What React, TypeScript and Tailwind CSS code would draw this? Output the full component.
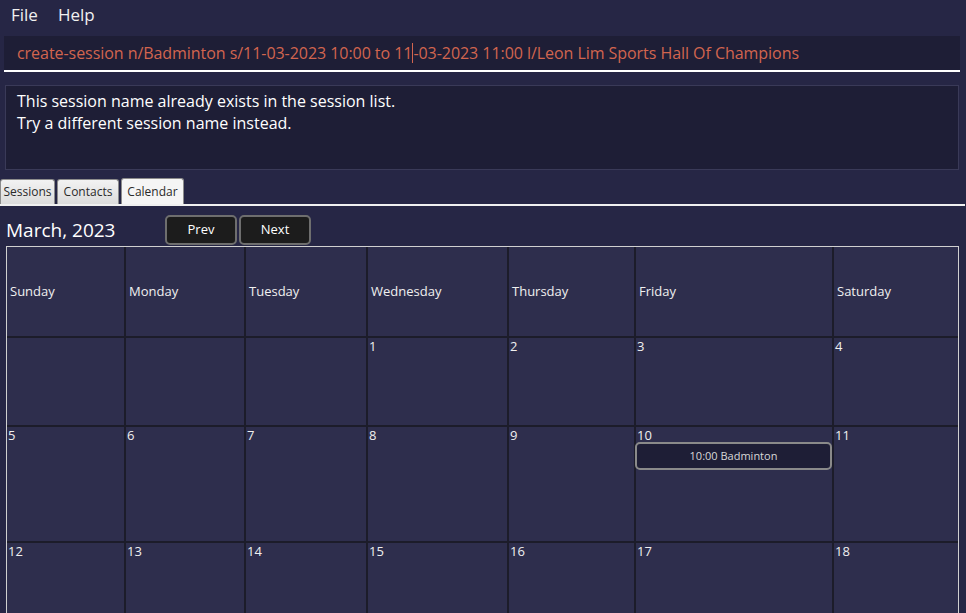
import React from "react";

const font = { fontFamily: '"Open Sans", "Noto Sans", sans-serif' };

const days = ["Sunday", "Monday", "Tuesday", "Wednesday", "Thursday", "Friday", "Saturday"];
const weeks: (number | null)[][] = [
  [null, null, null, 1, 2, 3, 4],
  [5, 6, 7, 8, 9, 10, 11],
  [12, 13, 14, 15, 16, 17, 18],
];

export default function App() {
  return (
    <div className="w-[966px] h-[613px] overflow-hidden bg-[#262645] text-white" style={font}>
      {/* Menu bar */}
      <div className="h-[30px] flex items-center pl-[11px] gap-[20px] text-[17px] text-[#f0f0f0]">
        <span>File</span>
        <span>Help</span>
      </div>
      {/* Command box */}
      <div className="mt-[6px] ml-[4px] w-[956px] h-[36px] bg-[#1e1e36] border-b-2 border-white flex items-center pl-[13px] text-[16px] tracking-[-0.05px] text-[#d2654f] whitespace-nowrap">
        <span>create-session n/Badminton s/11-03-2023 10:00 to 11</span>
        <span className="inline-block w-[1px] h-[20px] bg-[#d2654f]" />
        <span>-03-2023 11:00 l/Leon Lim Sports Hall Of Champions</span>
      </div>
      {/* Result box */}
      <div className="mt-[13px] ml-[5px] w-[954px] h-[85px] bg-[#1e1e36] border border-[#3a3a58] pl-[11px] pt-[4px] text-[16px] leading-[22px] text-white">
        <div>This session name already exists in the session list.</div>
        <div>Try a different session name instead.</div>
      </div>
      {/* Tabs */}
      <div className="mt-[8px] h-[26px] flex items-end gap-[2px] text-[12px] text-[#2a2a2a]">
        <div className="h-[25px] w-[55px] flex items-center justify-center bg-gradient-to-b from-[#f2f2f2] to-[#dcdcdc] border border-[#8c8c8c] border-b-0 rounded-t-[3px]">Sessions</div>
        <div className="h-[25px] w-[62px] flex items-center justify-center bg-gradient-to-b from-[#f2f2f2] to-[#dcdcdc] border border-[#8c8c8c] border-b-0 rounded-t-[3px]">Contacts</div>
        <div className="h-[26px] w-[63px] flex items-center justify-center bg-[#f5f5f5] border border-[#8c8c8c] border-b-0 rounded-t-[3px]">Calendar</div>
      </div>
      <div className="h-[2px] w-[965px] bg-[#f0f0f0]" />
      {/* Calendar header */}
      <div className="h-[40px] flex items-start">
        <div className="w-[165px] pl-[6px] pt-[11px] leading-[27px] text-[19px] text-white">March, 2023</div>
        <div className="flex gap-[2px] mt-[9px]">
          <button className="w-[72px] h-[30px] rounded-[5px] border-2 border-[#6e6e6e] bg-[#1c1c1c] text-[13px] text-white">Prev</button>
          <button className="w-[72px] h-[30px] rounded-[5px] border-2 border-[#6e6e6e] bg-[#1c1c1c] text-[13px] text-white">Next</button>
        </div>
      </div>
      {/* Calendar grid */}
      <div className="ml-[6px] w-[953px] border border-[#d0d0d0] border-b-0 bg-[#1c1c2a]">
        <div className="grid grid-cols-[117px_118px_120px_139px_125px_196px_124px] grid-rows-[89px_87px_114px_80px] gap-[2px] text-[13px] text-[#f0f0f0]">
          {days.map((d) => (
            <div key={d} className="bg-[#2e2e4d] flex items-center pl-[3px]">
              {d}
            </div>
          ))}
          {weeks.flatMap((w, wi) =>
            w.map((n, di) => (
              <div key={`${wi}-${di}`} className="bg-[#2e2e4d] flex flex-col">
                <div className="pl-[1px] h-[15px] leading-[16px]">{n ?? ""}</div>
                {n === 10 && (
                  <div className="-ml-[1px] w-[197px] h-[28px] rounded-[5px] border-2 border-[#8a8a8a] bg-[#1e1e36] flex items-center justify-center text-[11px] text-[#d8d8d8]">
                    10:00 Badminton
                  </div>
                )}
              </div>
            ))
          )}
        </div>
      </div>
    </div>
  );
}
